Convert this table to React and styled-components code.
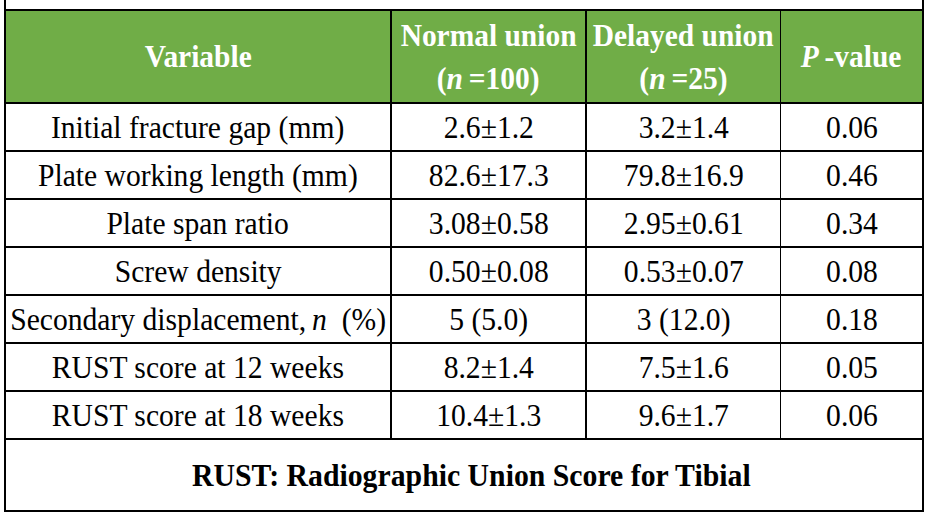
import React from 'react';
import styled, { createGlobalStyle } from 'styled-components';

const Global = createGlobalStyle`
  html, body { margin: 0; padding: 0; background: #fff; }
  body { font-family: "Liberation Serif", "Times New Roman", serif; color: #000; }
`;

const Page = styled.div`
  padding-left: 4px;
`;

const Frame = styled.div`
  width: 920px;
  box-sizing: border-box;
  border-left: 2px solid #000;
  border-right: 2px solid #000;
`;

const Gap = styled.div`
  height: 9px;
`;

const Row = styled.div`
  display: grid;
  grid-template-columns: 384px 195px 195px 142px;
  height: ${(p) => p.$h}px;
  border-top: ${(p) => (p.$top ? '2px solid #000' : 'none')};
  border-bottom: 2px solid #000;
  background: ${(p) => (p.$head ? '#70ad47' : '#fff')};
  color: ${(p) => (p.$head ? '#fff' : '#000')};
`;

const Cell = styled.div`
  box-sizing: border-box;
  min-width: 0;
  border-left: ${(p) => p.$line || 0}px solid #000;
  display: flex;
  flex-direction: column;
  align-items: center;
  justify-content: center;
  white-space: nowrap;
`;

const Txt = styled.span`
  display: block;
  font-size: 32px;
  line-height: 1;
  transform: scaleX(0.925);
`;

const HeadLine = styled.span`
  display: block;
  font-size: 31px;
  font-weight: 700;
  line-height: 43px;
  transform: scaleX(0.95);
`;

const Em = styled.i`
  font-style: italic;
`;

const Footer = styled.div`
  height: 70px;
  border-bottom: 2px solid #000;
  display: flex;
  align-items: center;
  justify-content: center;
  padding-left: 14px;
  white-space: nowrap;
`;

const FootTxt = styled.span`
  display: block;
  font-size: 32px;
  font-weight: 700;
  line-height: 1;
  transform: scaleX(0.93);
`;

const rows = [
  ['Initial fracture gap (mm)', '2.6±1.2', '3.2±1.4', '0.06'],
  ['Plate working length (mm)', '82.6±17.3', '79.8±16.9', '0.46'],
  ['Plate span ratio', '3.08±0.58', '2.95±0.61', '0.34'],
  ['Screw density', '0.50±0.08', '0.53±0.07', '0.08'],
  [
    <>
      Secondary displacement,{'\u2009'}
      <Em>n</Em>
      {'\u00a0 '}(%)
    </>,
    '5 (5.0)',
    '3 (12.0)',
    '0.18',
  ],
  ['RUST score at 12 weeks', '8.2±1.4', '7.5±1.6', '0.05'],
  ['RUST score at 18 weeks', '10.4±1.3', '9.6±1.7', '0.06'],
];

export default function App() {
  return (
    <>
      <Global />
      <Page>
        <Frame>
          <Gap />
          <Row $h={91} $top $head>
            <Cell>
              <HeadLine>Variable</HeadLine>
            </Cell>
            <Cell $line={2}>
              <HeadLine>Normal union</HeadLine>
              <HeadLine>
                (<Em>n</Em>
                {'\u2009'}=100)
              </HeadLine>
            </Cell>
            <Cell $line={2}>
              <HeadLine>Delayed union</HeadLine>
              <HeadLine>
                (<Em>n</Em>
                {'\u2009'}=25)
              </HeadLine>
            </Cell>
            <Cell $line={1}>
              <HeadLine>
                <Em>P</Em>
                {'\u2009'}-value
              </HeadLine>
            </Cell>
          </Row>
          {rows.map((r, i) => (
            <Row key={i} $h={46}>
              <Cell>
                <Txt>{r[0]}</Txt>
              </Cell>
              <Cell $line={2}>
                <Txt>{r[1]}</Txt>
              </Cell>
              <Cell $line={2}>
                <Txt>{r[2]}</Txt>
              </Cell>
              <Cell $line={1}>
                <Txt>{r[3]}</Txt>
              </Cell>
            </Row>
          ))}
          <Footer>
            <FootTxt>RUST: Radiographic Union Score for Tibial</FootTxt>
          </Footer>
        </Frame>
      </Page>
    </>
  );
}
